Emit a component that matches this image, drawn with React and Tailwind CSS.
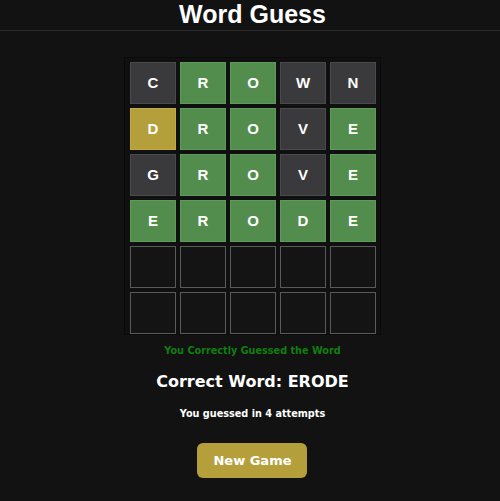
import React from "react";

// ── Board data ────────────────────────────────────────────────────────────────
const rows = [
  [["C", "gray"], ["R", "green"], ["O", "green"], ["W", "gray"], ["N", "gray"]],
  [["D", "yellow"], ["R", "green"], ["O", "green"], ["V", "gray"], ["E", "green"]],
  [["G", "gray"], ["R", "green"], ["O", "green"], ["V", "gray"], ["E", "green"]],
  [["E", "green"], ["R", "green"], ["O", "green"], ["D", "green"], ["E", "green"]],
  [["", "empty"], ["", "empty"], ["", "empty"], ["", "empty"], ["", "empty"]],
  [["", "empty"], ["", "empty"], ["", "empty"], ["", "empty"], ["", "empty"]],
];

const tileStyles = {
  gray: "bg-[#3a3a3c] border-[#4a4a4c]",
  green: "bg-[#538d4e] border-[#5f9a5a]",
  yellow: "bg-[#b59f3b] border-[#c0aa48]",
  empty: "bg-[#141414] border-[#5a5a5a]",
};

function Tile({ letter, state }) {
  return (
    <div
      className={`w-[46px] h-[42px] border flex items-center justify-center text-white text-[15px] font-bold ${tileStyles[state]}`}
      style={{ fontFamily: "'Liberation Sans', Arial, sans-serif" }}
    >
      {letter}
    </div>
  );
}

export default function App() {
  return (
    <div className="w-[500px] h-[501px] bg-[#121212] flex flex-col items-center overflow-hidden">
      {/* Header */}
      <div className="w-full h-[31px] border-b border-[#2a2a2a] flex items-center justify-center">
        <h1
          className="text-white text-[25px] font-bold leading-none -mt-[2px] ml-[5px]"
          style={{ fontFamily: "'Liberation Sans', Arial, sans-serif" }}
        >
          Word Guess
        </h1>
      </div>

      {/* Board */}
      <div className="mt-[26px] ml-[5px] bg-[#101010] border border-[#0a0a0a] pt-[4px] pl-[5px] pr-[4px] flex flex-col gap-[4px]">
        {rows.map((row, r) => (
          <div key={r} className="flex gap-[4px]">
            {row.map(([l, s], c) => (
              <Tile key={c} letter={l} state={s} />
            ))}
          </div>
        ))}
      </div>

      {/* Result */}
      <div className="flex flex-col items-center ml-[5px]" style={{ fontFamily: "'DejaVu Sans', Verdana, sans-serif" }}>
        <p className="mt-[9px] text-[#0f7f0f] text-[9.7px] font-bold leading-[14px]">
          You Correctly Guessed the Word
        </p>
        <p className="mt-[14px] text-white text-[16px] font-bold leading-[20px]">
          Correct Word: ERODE
        </p>
        <p className="mt-[15px] text-white text-[9.7px] font-bold leading-[14px]">
          You guessed in 4 attempts
        </p>
        <button className="mt-[22px] w-[110px] h-[35px] rounded-[6px] bg-[#b59f3b] text-white text-[13px] font-bold">
          New Game
        </button>
      </div>
    </div>
  );
}
